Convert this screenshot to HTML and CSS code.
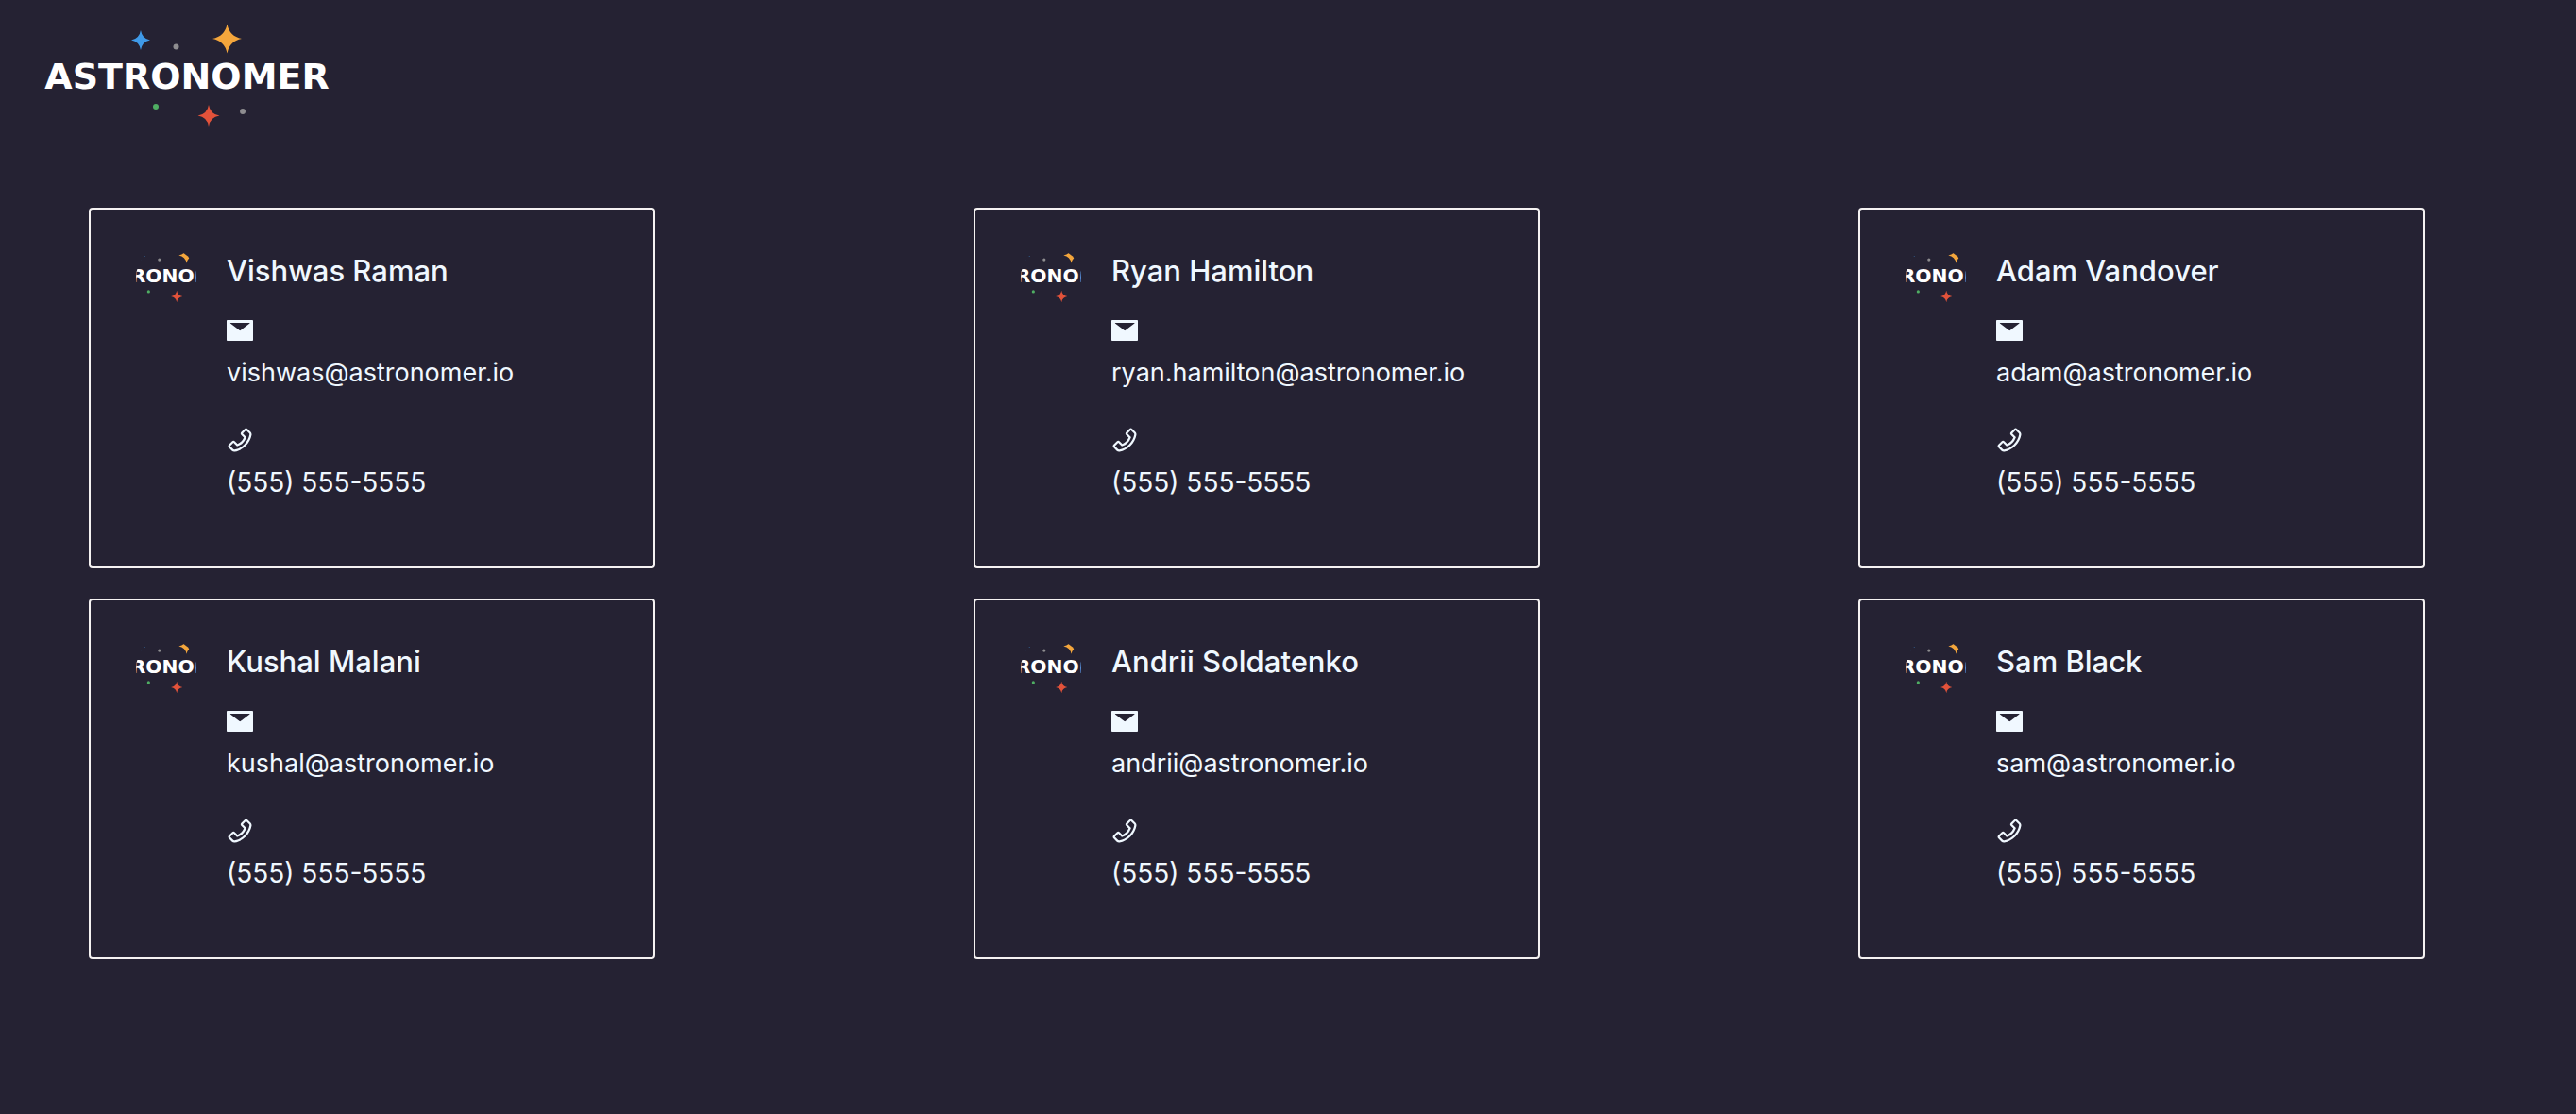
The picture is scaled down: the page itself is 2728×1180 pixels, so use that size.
FILE: index.html
```html
<!DOCTYPE html>
<html lang="en">
<head>
<meta charset="utf-8">
<meta name="viewport" content="width=device-width, initial-scale=1">
<title>Astronomer</title>
<link rel="stylesheet" href="styles.css">
</head>
<body>
<svg class="sprite" aria-hidden="true">
  <defs>
    <g id="logo">
      <path fill="#3f9ae8" d="M129 15Q130.500 24 139 25.500Q130.500 27 129 36Q127.500 27 119 25.500Q127.500 24 129 15Z"/>
      <path fill="#f4a63c" d="M220.500 8.500Q223 21.500 236 24Q223 26.500 220.500 39.500Q218 26.500 205 24Q218 21.500 220.500 8.500Z"/>
      <path fill="#e2523a" d="M201 94Q202.500 104 212.500 105.500Q202.500 107 201 117Q199.500 107 189.500 105.500Q199.500 104 201 94Z"/>
      <circle fill="#8e8d90" cx="166.500" cy="32.500" r="3"/>
      <circle fill="#8e8d90" cx="237" cy="101" r="3"/>
      <circle fill="#4fae63" cx="145" cy="96" r="3"/>
      <text class="wordmark" x="178" y="77" text-anchor="middle">ASTRONOMER</text>
    </g>
    <symbol id="mail" viewBox="0 0 1024 1024"><path d="M928 160H96c-17.700 0-32 14.300-32 32v640c0 17.700 14.300 32 32 32h832c17.700 0 32-14.300 32-32V192c0-17.700-14.300-32-32-32zm-80.800 108.900L531.700 514.400c-7.800 6.100-18.700 6.100-26.500 0L189.600 268.900A7.200 7.200 0 01194 256h648.800a7.200 7.200 0 014.400 12.900z"/></symbol>
    <symbol id="phone" viewBox="0 0 1024 1024"><path d="M877.100 238.700L770.600 132.300c-13-13-30.400-20.300-48.800-20.300s-35.800 7.200-48.800 20.300L558.300 246.800c-13 13-20.300 30.500-20.300 48.900 0 18.500 7.200 35.800 20.300 48.900l89.600 89.700a405.460 405.460 0 01-86.400 127.300c-36.700 36.900-79.600 66-127.200 86.600l-89.600-89.700c-13-13-30.400-20.300-48.800-20.300a68.200 68.200 0 00-48.800 20.300L132.300 673c-13 13-20.300 30.500-20.300 48.900 0 18.500 7.200 35.800 20.300 48.900l106.400 106.400c22.200 22.200 52.800 34.900 84.200 34.900 6.500 0 12.800-.5 19.200-1.600 132.400-21.800 263.800-92.300 369.900-198.300C818 606 888.400 474.600 910.400 342.100c6.300-37.600-6.300-76.300-33.300-103.400zm-37.600 91.500c-19.500 117.900-82.900 235.500-178.400 331s-213 158.900-330.900 178.400c-14.800 2.500-30-2.500-40.800-13.200L184.900 721.900 295.700 611l119.800 120 .9.900 21.600-8a481.290 481.290 0 00285.700-285.800l8-21.600-120.800-120.700 110.800-110.900 104.500 104.500c10.800 10.800 15.800 26 13.300 40.800z"/></symbol>
  </defs>
</svg>

<header class="header">
  <svg class="logo" viewBox="0 0 360 120" role="img" aria-label="Astronomer"><use href="#logo"/></svg>
</header>

<main class="cards">
  <article class="card">
    <svg class="avatar" viewBox="120 8 120 120" aria-hidden="true"><use href="#logo"/></svg>
    <div class="details">
      <h2 class="name">Vishwas Raman</h2>
      <div class="contact"><svg class="icon" aria-hidden="true"><use href="#mail"/></svg><p class="email">vishwas@astronomer.io</p></div>
      <div class="contact"><svg class="icon" aria-hidden="true"><use href="#phone"/></svg><p class="phone">(555) 555-5555</p></div>
    </div>
  </article>
  <article class="card">
    <svg class="avatar" viewBox="120 8 120 120" aria-hidden="true"><use href="#logo"/></svg>
    <div class="details">
      <h2 class="name">Ryan Hamilton</h2>
      <div class="contact"><svg class="icon" aria-hidden="true"><use href="#mail"/></svg><p class="email">ryan.hamilton@astronomer.io</p></div>
      <div class="contact"><svg class="icon" aria-hidden="true"><use href="#phone"/></svg><p class="phone">(555) 555-5555</p></div>
    </div>
  </article>
  <article class="card">
    <svg class="avatar" viewBox="120 8 120 120" aria-hidden="true"><use href="#logo"/></svg>
    <div class="details">
      <h2 class="name">Adam Vandover</h2>
      <div class="contact"><svg class="icon" aria-hidden="true"><use href="#mail"/></svg><p class="email">adam@astronomer.io</p></div>
      <div class="contact"><svg class="icon" aria-hidden="true"><use href="#phone"/></svg><p class="phone">(555) 555-5555</p></div>
    </div>
  </article>
  <article class="card">
    <svg class="avatar" viewBox="120 8 120 120" aria-hidden="true"><use href="#logo"/></svg>
    <div class="details">
      <h2 class="name">Kushal Malani</h2>
      <div class="contact"><svg class="icon" aria-hidden="true"><use href="#mail"/></svg><p class="email">kushal@astronomer.io</p></div>
      <div class="contact"><svg class="icon" aria-hidden="true"><use href="#phone"/></svg><p class="phone">(555) 555-5555</p></div>
    </div>
  </article>
  <article class="card">
    <svg class="avatar" viewBox="120 8 120 120" aria-hidden="true"><use href="#logo"/></svg>
    <div class="details">
      <h2 class="name">Andrii Soldatenko</h2>
      <div class="contact"><svg class="icon" aria-hidden="true"><use href="#mail"/></svg><p class="email">andrii@astronomer.io</p></div>
      <div class="contact"><svg class="icon" aria-hidden="true"><use href="#phone"/></svg><p class="phone">(555) 555-5555</p></div>
    </div>
  </article>
  <article class="card">
    <svg class="avatar" viewBox="120 8 120 120" aria-hidden="true"><use href="#logo"/></svg>
    <div class="details">
      <h2 class="name">Sam Black</h2>
      <div class="contact"><svg class="icon" aria-hidden="true"><use href="#mail"/></svg><p class="email">sam@astronomer.io</p></div>
      <div class="contact"><svg class="icon" aria-hidden="true"><use href="#phone"/></svg><p class="phone">(555) 555-5555</p></div>
    </div>
  </article>
</main>
</body>
</html>
```
FILE: styles.css
```css
* {
  box-sizing: border-box;
}

body {
  margin: 0;
  background: #252233;
  color: #f0f8ff;
  font-family: Inter, "Liberation Sans", sans-serif;
}

.sprite {
  display: block;
  width: 0;
  height: 0;
}

.header {
  padding: 17px 20px 83px;
}

.logo {
  display: block;
  width: 360px;
  height: 120px;
}

.wordmark {
  fill: #fff;
  font-family: "DejaVu Sans", sans-serif;
  font-size: 38px;
  font-weight: 700;
}

.cards {
  display: grid;
  grid-template-columns: repeat(3, 600px);
  justify-content: space-between;
  gap: 32px;
  padding: 0 160px 48px 94px;
}

.card {
  display: flex;
  gap: 30px;
  padding: 36px 48px 66px;
  border: 2px solid #f5f2f2;
  border-radius: 4px;
}

.avatar {
  flex: none;
  width: 64px;
  height: 64px;
  margin-top: 4px;
  border-radius: 50%;
  overflow: hidden;
}

.details {
  min-width: 0;
}

.name {
  margin: 0 0 18px;
  padding-left: 2px;
  font-size: 31px;
  font-weight: 500;
  line-height: 58px;
}

.contact + .contact {
  margin-top: 32px;
}

.icon {
  display: block;
  width: 32px;
  height: 32px;
  margin-bottom: 6px;
  fill: currentColor;
}

.email,
.phone {
  margin: 0;
  padding-left: 2px;
  line-height: 46px;
}

.email {
  font-size: 27px;
}

.phone {
  font-size: 28px;
}
```
